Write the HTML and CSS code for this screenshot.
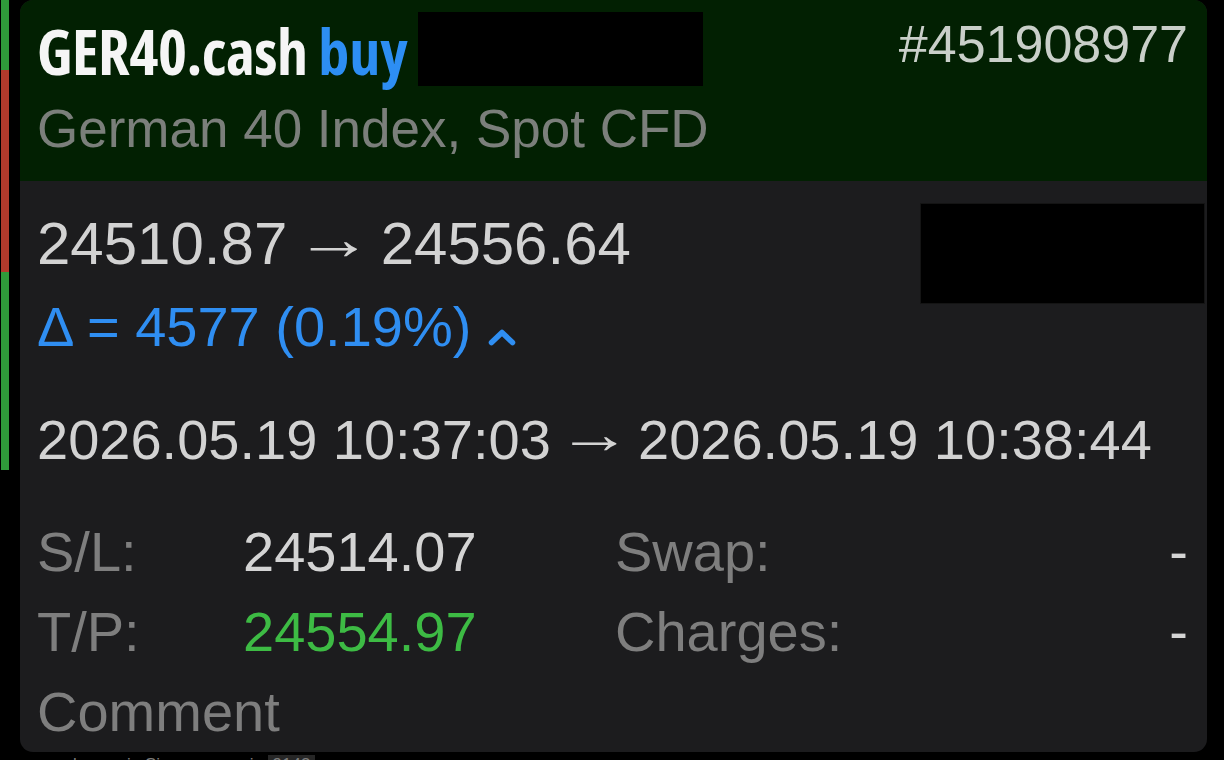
FILE: index.html
```html
<!DOCTYPE html>
<html>
<head>
<meta charset="utf-8">
<link rel="stylesheet" href="styles.css">
</head>
<body>
<div class="screen">
  <div class="main">
    <div class="strip">
      <div class="seg seg-green seg-a"></div>
      <div class="seg seg-red seg-b"></div>
      <div class="seg seg-green seg-c"></div>
    </div>
    <div class="card">
      <div class="header">
        <div class="head-left">
          <div class="title"><span class="sym">GER40.cash</span> <span class="side">buy</span></div>
          <div class="subtitle">German 40 Index, Spot CFD</div>
        </div>
        <div class="ticket">#451908977</div>
        <div class="redact redact-title"></div>
      </div>
      <div class="content">
        <div class="prices"><span>24510.87</span><span class="arr arr-p">→</span><span>24556.64</span></div>
        <div class="delta">Δ = 4577 (0.19%)<svg class="chev" width="28" height="18" viewBox="0 0 28 18"><polyline points="3.5,14.5 14,4.5 24.5,14.5" fill="none" stroke="#2f8ef2" stroke-width="5.5" stroke-linecap="round" stroke-linejoin="round"/></svg></div>
        <div class="times"><span>2026.05.19 10:37:03</span><span class="arr arr-t">→</span><span>2026.05.19 10:38:44</span></div>
        <div class="grid">
          <div class="lbl">S/L:</div>
          <div class="val">24514.07</div>
          <div class="lbl">Swap:</div>
          <div class="val dash">-</div>
          <div class="lbl">T/P:</div>
          <div class="val green">24554.97</div>
          <div class="lbl">Charges:</div>
          <div class="val dash">-</div>
          <div class="lbl comment">Comment</div>
        </div>
        <div class="redact redact-profit"></div>
      </div>
    </div>
  </div>
  <div class="below">
    <span class="below-text">employees in Singapore as i</span>
    <span class="below-tag">9143</span>
  </div>
</div>
</body>
</html>
```

FILE: styles.css
```css
html, body {
  margin: 0;
  padding: 0;
  background: #000;
}
body {
  width: 1224px;
  height: 760px;
  overflow: hidden;
  font-family: "Liberation Sans", Arial, sans-serif;
}
.screen {
  width: 1224px;
  height: 760px;
  display: flex;
  flex-direction: column;
}
.main {
  display: flex;
  height: 752px;
  flex-shrink: 0;
}
.strip {
  width: 8px;
  margin-left: 1px;
  display: flex;
  flex-direction: column;
}
.seg-a { height: 70px; }
.seg-b { height: 202px; }
.seg-c { height: 198px; }
.seg-green { background: #2f9a3a; }
.seg-red { background: #b23a2c; }
.card {
  margin-left: 11px;
  width: 1187px;
  border-radius: 13px;
  overflow: hidden;
  background: #1c1c1e;
  display: flex;
  flex-direction: column;
  position: relative;
}
.header {
  background: #022002;
  height: 181px;
  flex-shrink: 0;
  display: flex;
  justify-content: space-between;
  padding: 11px 19px 0 17px;
  box-sizing: border-box;
  position: relative;
}
.title {
  font-family: "Open Sans", sans-serif;
  font-weight: 700;
  font-stretch: 75%;
  font-size: 62px;
  line-height: 80px;
  color: #f5f5f5;
  white-space: nowrap;
  letter-spacing: -0.5px;
}
.side { color: #2d8ef3; letter-spacing: 0; }
.subtitle {
  margin-top: 3px;
  font-size: 53px;
  line-height: 70px;
  color: #7b7f7b;
  white-space: nowrap;
}
.ticket {
  margin-top: 3px;
  font-size: 52px;
  line-height: 60px;
  color: #c9cfc9;
}
.redact {
  position: absolute;
  background: #000;
}
.redact-title {
  left: 398px;
  top: 12px;
  width: 285px;
  height: 74px;
}
.content {
  padding: 23px 19px 0 17px;
  position: relative;
  flex: 1;
  overflow: hidden;
}
.redact-profit {
  left: 900px;
  top: 22px;
  width: 285px;
  height: 101px;
  border: 1px solid #141414;
  box-sizing: border-box;
}
.arr {
  display: inline-block;
  font-family: "Liberation Serif", "DejaVu Serif", serif;
  font-weight: 400;
}
.arr-p {
  margin: 0 16.7px;
  transform: translateY(-5px) scaleX(1.3);
}
.arr-t {
  margin: 0 15.6px;
  transform: translateY(-6px) scaleX(1.33);
}
.prices {
  font-size: 60px;
  line-height: 80px;
  color: #d2d2d2;
  white-space: nowrap;
}
.delta {
  margin-top: 3px;
  font-size: 56px;
  line-height: 80px;
  color: #2f8ef2;
  white-space: nowrap;
}
.chev {
  margin-left: 17px;
  vertical-align: 0px;
}
.times {
  margin-top: 33px;
  font-size: 56px;
  line-height: 80px;
  color: #d2d2d2;
  white-space: nowrap;
}
.grid {
  margin-top: 32px;
  display: grid;
  grid-template-columns: 206px 372px 1fr auto;
  font-size: 56px;
  line-height: 80px;
}
.lbl { color: #7e7e7e; white-space: nowrap; }
.val { color: #d4d4d4; white-space: nowrap; }
.green { color: #3dbb44; }
.dash { text-align: right; }
.comment { grid-column: 1 / 3; }
.below {
  height: 8px;
  overflow: hidden;
  display: flex;
  align-items: flex-start;
  padding-left: 40px;
  font-size: 17px;
  line-height: 20px;
  color: #7c7c7c;
}
.below-text { margin-top: 3px; }
.below-tag {
  margin-left: 14px;
  background: #262626;
  padding: 0 5px;
  margin-top: 3px;
}
```
